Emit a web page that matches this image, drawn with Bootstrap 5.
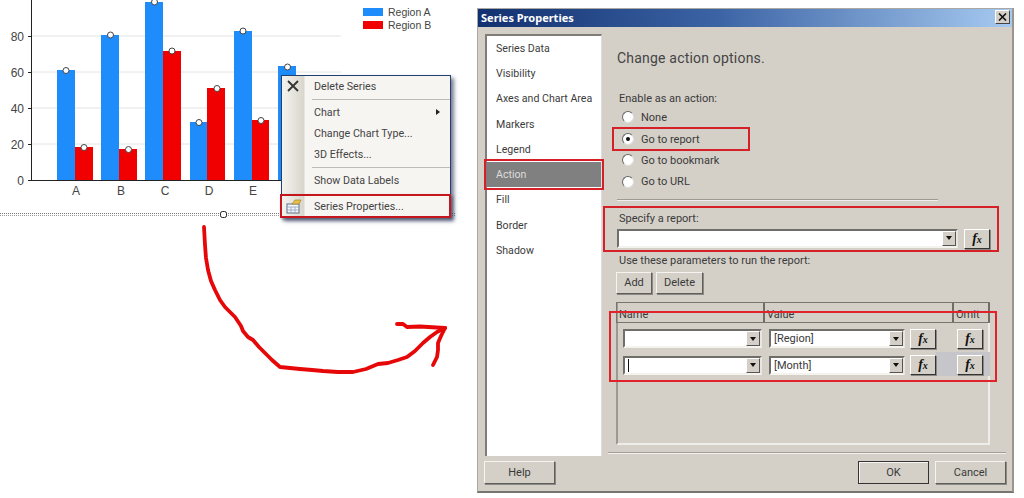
<!DOCTYPE html>
<html lang="en"><head><meta charset="utf-8"><title>Series Properties</title>
<link rel="stylesheet" href="https://cdn.jsdelivr.net/npm/bootstrap@5.3.0/dist/css/bootstrap.min.css">
<style>
html,body{margin:0;background:#fff;height:498px;overflow:hidden}
.stage{width:1024px;height:498px;overflow:hidden}
.leftpane{width:477px;height:498px;flex:none}
.leftpane svg{display:block}
.chart-t{font-family:"Liberation Sans",Arial,sans-serif;font-size:12px;fill:#444}
.legend-t{font-size:10.5px}
.ctx.dropdown-menu{position:absolute;left:281px;top:75px;width:170px;height:143px;padding:0;margin:0;border:1px solid #24406e;border-radius:0;background:linear-gradient(90deg,#f4f3ee 0,#d8d6cc 22px,#f7f5f2 23px);box-shadow:3px 3px 4px rgba(60,70,100,.7);font:11px/15px Roboto,sans-serif;min-width:0;display:block}
.ctx .dropdown-item{padding:0 0 0 32px;height:21px;line-height:21px;color:#444;font-size:10.700px;position:relative;background:none}
.ctx .dropdown-divider{margin:0 0 0 30px;border-color:#bbb;opacity:1}
.ctx .it-first{margin-top:0;height:23px}
.ctx .it-gap{margin-top:2px}
.ctx .subarrow{position:absolute;right:10px;top:7px;width:0;height:0;border-left:4px solid #222;border-top:3.5px solid transparent;border-bottom:3.5px solid transparent}
.ctx .gicon{position:absolute;left:4px;top:3px}
.menu-hi{position:absolute;left:-2px;top:118px;width:171px;height:24px;border:2px solid #c5161d;box-shadow:2px 2px 3px rgba(60,70,100,.6);pointer-events:none}
.dlg{width:537px;height:485px;margin-top:8px;background:#d4d0c8;border:1px solid #a9a8a2;border-right:2px solid #98968f;border-bottom:2px solid #77756f;font:11px/15px Roboto,sans-serif;color:#3a3a3a;flex:none}
.dlg-title{height:18px;background:linear-gradient(90deg,#12306f 0,#3c64a5 45%,#a6caf0 100%);color:#fff;font:700 11px/17px "Noto Sans",sans-serif;padding-left:3px}
.xbtn{width:15px;height:14px;background:#d4d0c8;border:1px solid;border-color:#fff #444 #444 #fff;margin-right:2px;margin-top:1px;line-height:0}
.dlg-main{height:428px}
.navcol{width:117px;margin-left:7px;margin-top:7px;height:422px;flex:none;background:#fff;border:2px solid #7f7d78;border-right:1px solid #ddd;border-bottom:0}
.navcol .list-group-item{border:0;background:none;color:#3c3c3c;height:25.3px;line-height:25px;padding:0 0 0 9px;border-radius:0;font-size:10.600px;white-space:nowrap}
.navcol .list-group-item.sel{background:#808080;color:#ddd;outline:2px solid #d62027;outline-offset:1px}
.content{padding-left:15px;width:411px}
.headline{font-size:14px;line-height:20px;margin-top:21px;color:#444;letter-spacing:.2px}
.lbl{height:15px;white-space:nowrap}
.radio-row{height:21.5px;padding-left:5px;margin-top:0;gap:7px;width:133px}
.radio-row.first{margin-top:1px}
.radio-row.hi{outline:2px solid #d62027;outline-offset:-1px;margin-left:-4px;padding:1px 0 0 9px;width:136px}
.rdo{width:12px;height:12px;border-radius:50%;background:#fff;border:1px solid #777;border-color:#666 #ddd #ddd #666;flex:none;display:flex;align-items:center;justify-content:center}
.rdo.on:after{content:"";width:4px;height:4px;border-radius:50%;background:#111}
.sep1{height:2px;width:321px;background:#9c9a94;border-bottom:1px solid #eee;margin-top:6px}
.spec{width:396px;height:46px;margin-left:-14px;margin-top:5px;border:2px solid #d62027;padding:3px 0 0 12px}
.combo{height:19px;background:#fff;border:2px solid;border-color:#6f6e69 #e8e6e0 #f4f3ee #6f6e69;font-size:11px;padding-left:3px;line-height:15px}
.combo .drop{width:14px;height:100%;margin-left:auto;background:#d4d0c8;border:1px solid;border-color:#fff #555 #555 #fff;display:flex;align-items:center;justify-content:center;flex:none}
.combo .drop:after{content:"";border-top:4px solid #111;border-left:3.5px solid transparent;border-right:3.5px solid transparent}
.w-spec{width:341px}.w-name{width:139px}.w-val{width:136px}
.bevel.btn{background:#d4d0c8;border:1px solid;border-color:#f5f4f0 #5f5e5a #5f5e5a #f5f4f0;border-radius:0;padding:0;color:#3a3a3a;font:11px/15px Roboto,sans-serif;box-shadow:1px 1px 0 #8a8984}
.bevel.def{border-color:#333;box-shadow:inset 1px 1px 0 #f5f4f0}
.bevel.btn.fx{width:26px;height:20px;font:italic 700 14px/17px "Liberation Serif",serif;color:#111;border-color:#fff #333 #333 #fff}
.fx small{font-size:10px}
.btn-add{width:36px;height:22px}.btn-del{width:47px;height:22px}
.wd{width:71px;height:23px}
.pgrid{width:374px;height:143px;margin-left:-1px;margin-top:8px;border:2px solid #b7b5ae;border-top:0;border-bottom:2px solid #eeedea;border-right:2px solid #eeedea;border-left-color:#9b9992;background:#d4d0c8}
.phead{height:21px;border:1px solid #77756f;border-right:0;margin-left:-2px;margin-right:-2px}
.phead>div{border-right:2px solid #6f6d68;padding-left:2px;line-height:23px;overflow:hidden}
.c1{width:148px}.c2{width:189px}.c3{width:36px}
.prow{height:27px;padding-left:5px;align-items:center}
.prow.r1{margin-top:3px;height:26px}
.prow .mt-v{margin-left:7px}.prow .fx1{margin-left:5px}.prow .fx2{margin-left:21px}
.rowtint{position:absolute;left:318px;top:50px;width:54px;height:24px;background:#c6c6ca}
.prow>*{position:relative}
.params-hi{position:absolute;left:-9px;top:9px;width:388px;height:71px;border:2px solid #e2222a;pointer-events:none}
.caret-i{display:block;width:1px;height:13px;background:#111}
.sep2{width:398px;height:2px;margin-left:-9px;background:#a09e98;border-bottom:1px solid #f2f1ec;margin-top:7px}
.foot{height:37px;padding:6px 6px 0 6px}
</style></head>
<body>
<div class="stage d-flex">
 <div class="leftpane position-relative">
  <svg width="477" height="498" viewBox="0 0 477 498" xmlns="http://www.w3.org/2000/svg">
   <g stroke="#e4e4e4" stroke-width="1"><path d="M31 36H341M31 72H341M31 108H341M31 144H341"/></g>
   <g fill="#1e8cfa"><rect x="57" y="70" width="18" height="110"/><rect x="101" y="35" width="18" height="145"/><rect x="145" y="2" width="18" height="178"/><rect x="190" y="122" width="18" height="58"/><rect x="234" y="31" width="18" height="149"/><rect x="278" y="66" width="18" height="114"/></g>
   <g fill="#f00000"><rect x="75" y="147" width="18" height="33"/><rect x="119" y="149" width="18" height="31"/><rect x="163" y="51" width="18" height="129"/><rect x="207" y="88" width="18" height="92"/><rect x="252" y="120" width="17" height="60"/></g>
   <path d="M31.500 0V181M28 180.500H300M28 36.500H31M28 72.500H31M28 108.500H31M28 144.500H31" stroke="#222" fill="none"/>
   <g fill="#fff" stroke="#444" stroke-width="1"><circle cx="66" cy="70.500" r="3"/><circle cx="84" cy="147.500" r="3"/><circle cx="110.500" cy="35" r="3"/><circle cx="128.500" cy="149.500" r="3"/><circle cx="154.500" cy="2" r="3"/><circle cx="172" cy="51" r="3"/><circle cx="199" cy="122.500" r="3"/><circle cx="217" cy="88.500" r="3"/><circle cx="243" cy="31" r="3"/><circle cx="261" cy="120.500" r="3"/><circle cx="287.500" cy="67" r="3"/></g>
   <g class="chart-t" text-anchor="end"><text x="24" y="41">80</text><text x="24" y="77">60</text><text x="24" y="113">40</text><text x="24" y="149">20</text><text x="24" y="185">0</text></g>
   <g class="chart-t" text-anchor="middle"><text x="76" y="195">A</text><text x="121" y="195">B</text><text x="165" y="195">C</text><text x="209" y="195">D</text><text x="253" y="195">E</text></g>
   <rect x="363" y="8" width="20" height="8" fill="#1e8cfa"/><rect x="363" y="21" width="20" height="8" fill="#f00000"/>
   <text class="chart-t legend-t" x="388" y="16">Region A</text><text class="chart-t legend-t" x="388" y="29">Region B</text>
   <path d="M0 213.500H455" stroke="#777" stroke-dasharray="1 1"/><path d="M0 215.500H455" stroke="#999" stroke-dasharray="1 1"/>
   <rect x="220.500" y="211.500" width="6" height="6" rx="2" fill="#fff" stroke="#222"/>
   <g fill="none" stroke="#e60808" stroke-width="3.800" stroke-linecap="round" stroke-linejoin="round">
    <path d="M204 227L204.500 236 205 245 206 258 208 270 211 281 215 290 220 300 225 307 231 313 235 317 241 326 243 331 248 337 253 340 259 347 265 353 272 360 280 367 290 368 300 369 312 370 323 371 338 372 353 372 366 369 378 364 388 363 398 360 407 357 415 351 423 343 430 337 437 332 445 328"/>
    <path d="M397 324L403 324 407 327 420 326.500 445 328"/>
    <path d="M445 328L441 336 438 343 438 350 437 357 433 365"/>
   </g>
  </svg>
  <div class="ctx dropdown-menu show">
   <a class="dropdown-item it-first" href="#"><svg class="gicon" width="14" height="14" viewBox="0 0 14 14"><path d="M2 2L12 12M12 2L2 12" stroke="#333" stroke-width="1.800"/></svg>Delete Series</a>
   <hr class="dropdown-divider">
   <a class="dropdown-item it-gap" href="#">Chart<span class="subarrow"></span></a>
   <a class="dropdown-item" href="#">Change Chart Type...</a>
   <a class="dropdown-item" href="#">3D Effects...</a>
   <hr class="dropdown-divider" style="margin-top:2px">
   <a class="dropdown-item it-gap" href="#">Show Data Labels</a>
   <a class="dropdown-item" style="margin-top:5px" href="#"><svg class="gicon" width="16" height="15" viewBox="0 0 16 15"><rect x="1" y="5" width="12" height="9" fill="#f4f6fa" stroke="#5d6f8a"/><path d="M1 8H13M5 8V14M9 8V14M1 11H13" stroke="#8fa2bd" stroke-width=".8"/><path d="M6 5L9 1H15L13 5Z" fill="#e8c04a" stroke="#a5842a" stroke-width=".7"/></svg>Series Properties...</a>
   <div class="menu-hi"></div>
  </div>
 </div>

 <div class="dlg d-flex flex-column">
  <div class="dlg-title d-flex justify-content-between align-items-start"><span>Series Properties</span>
   <span class="xbtn d-flex align-items-center justify-content-center"><svg width="9" height="8" viewBox="0 0 9 8"><path d="M1 0.500L8 7.500M8 0.500L1 7.500" stroke="#111" stroke-width="1.600"/></svg></span></div>
  <div class="dlg-main d-flex">
   <div class="navcol">
    <div class="list-group">
     <div class="list-group-item">Series Data</div><div class="list-group-item">Visibility</div><div class="list-group-item">Axes and Chart Area</div><div class="list-group-item">Markers</div><div class="list-group-item">Legend</div><div class="list-group-item sel">Action</div><div class="list-group-item">Fill</div><div class="list-group-item">Border</div><div class="list-group-item">Shadow</div>
    </div>
   </div>
   <div class="content d-flex flex-column">
    <div class="headline">Change action options.</div>
    <div class="lbl" style="margin:23px 0 0 2px">Enable as an action:</div>
    <div class="radio-row first d-flex align-items-center"><span class="rdo"></span>None</div>
    <div class="radio-row hi d-flex align-items-center"><span class="rdo on"></span>Go to report</div>
    <div class="radio-row d-flex align-items-center"><span class="rdo"></span>Go to bookmark</div>
    <div class="radio-row d-flex align-items-center"><span class="rdo"></span>Go to URL</div>
    <div class="sep1"></div>
    <div class="spec">
     <div class="lbl" style="margin-left:2px">Specify a report:</div>
     <div class="d-flex" style="margin-top:3px;gap:6px"><div class="combo d-flex w-spec"><span class="drop"></span></div><button class="bevel btn fx">f<small>x</small></button></div>
    </div>
    <div class="lbl" style="margin:1px 0 0 2px">Use these parameters to run the report:</div>
    <div class="d-flex" style="margin:4px 0 0 -1px;gap:4px"><button class="bevel btn btn-add">Add</button><button class="bevel btn btn-del">Delete</button></div>
    <div class="pgrid position-relative">
     <div class="phead d-flex"><div class="c1">Name</div><div class="c2">Value</div><div class="c3">Omit</div></div>
     <div class="rowtint"></div>
     <div class="prow r1 d-flex"><div class="combo d-flex w-name"><span class="drop"></span></div><div class="combo d-flex w-val mt-v">[Region]<span class="drop"></span></div><button class="bevel btn fx fx1">f<small>x</small></button><button class="bevel btn fx fx2">f<small>x</small></button></div>
     <div class="prow d-flex"><div class="combo d-flex w-name align-items-center"><span class="caret-i"></span><span class="drop"></span></div><div class="combo d-flex w-val mt-v">[Month]<span class="drop"></span></div><button class="bevel btn fx fx1">f<small>x</small></button><button class="bevel btn fx fx2">f<small>x</small></button></div>
     <div class="params-hi"></div>
    </div>
    <div class="sep2"></div>
   </div>
  </div>
  <div class="foot d-flex justify-content-between">
   <button class="bevel btn wd">Help</button>
   <div class="d-flex" style="gap:6px"><button class="bevel btn wd def">OK</button><button class="bevel btn wd">Cancel</button></div>
  </div>
 </div>
</div>
<script src="https://cdn.jsdelivr.net/npm/bootstrap@5.3.0/dist/js/bootstrap.bundle.min.js"></script>
</body></html>
